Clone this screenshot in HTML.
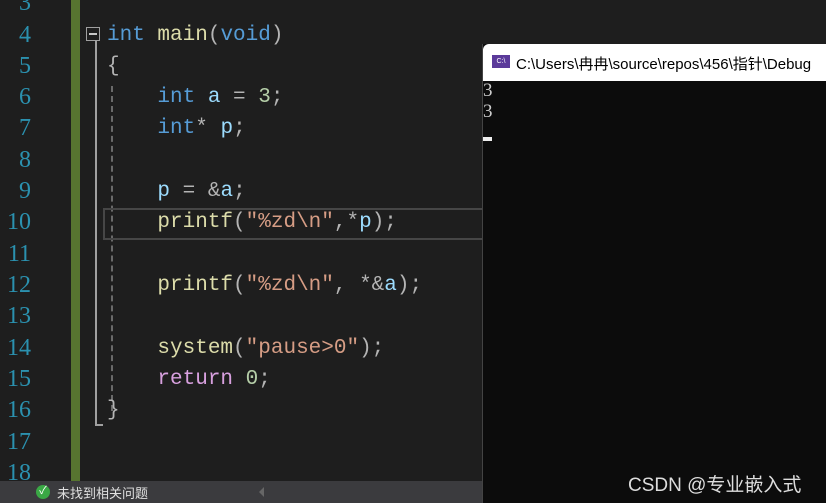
<!DOCTYPE html><html><head><meta charset="utf-8"><style>
body{margin:0;width:826px;height:503px;overflow:hidden;background:#1e1e1e;position:relative;font-family:"Liberation Mono","Noto Sans CJK SC",monospace}
.ln{position:absolute;left:0;width:31px;text-align:right;color:#2b91af;font-size:24px;line-height:31px;font-family:"Liberation Serif",serif}
.cl{position:absolute;left:107px;font-size:21px;line-height:31px;color:#b4b4b4;white-space:pre}
.k{color:#569cd6}.f{color:#dcdcaa}.v{color:#9cdcfe}.n{color:#b5cea8}.s{color:#d69d85}.r{color:#d8a0df}
</style></head><body>
<div style="position:absolute;left:71px;top:0;width:9px;height:481px;background:#577430"></div>
<div class="ln" style="top:-12px">3</div><div class="ln" style="top:20px">4</div><div class="ln" style="top:51px">5</div><div class="ln" style="top:82px">6</div><div class="ln" style="top:113px">7</div><div class="ln" style="top:145px">8</div><div class="ln" style="top:176px">9</div><div class="ln" style="top:207px">10</div><div class="ln" style="top:239px">11</div><div class="ln" style="top:270px">12</div><div class="ln" style="top:301px">13</div><div class="ln" style="top:333px">14</div><div class="ln" style="top:364px">15</div><div class="ln" style="top:395px">16</div><div class="ln" style="top:427px">17</div><div class="ln" style="top:458px">18</div>
<div style="position:absolute;left:86px;top:27px;width:12px;height:12px;border:1px solid #a0a0a0"></div>
<div style="position:absolute;left:89px;top:33px;width:8px;height:2px;background:#c8c8c8"></div>
<div style="position:absolute;left:95px;top:41px;width:2px;height:384px;background:#a0a0a0"></div>
<div style="position:absolute;left:95px;top:424px;width:8px;height:2px;background:#a0a0a0"></div>
<div style="position:absolute;left:111px;top:86px;width:0;height:325px;border-left:2px dashed #6a6a6a"></div>
<div style="position:absolute;left:103px;top:208px;width:380px;height:28px;border:2px solid #464646"></div>
<div class="cl" style="top:20px"><span class="k">int</span> <span class="f">main</span>(<span class="k">void</span>)</div>
<div class="cl" style="top:51px">{</div>
<div class="cl" style="top:82px">    <span class="k">int</span> <span class="v">a</span> = <span class="n">3</span>;</div>
<div class="cl" style="top:113px">    <span class="k">int</span>* <span class="v">p</span>;</div>
<div class="cl" style="top:176px">    <span class="v">p</span> = &amp;<span class="v">a</span>;</div>
<div class="cl" style="top:207px">    <span class="f">printf</span>(<span class="s">″%zd\n″</span>,*<span class="v">p</span>);</div>
<div class="cl" style="top:270px">    <span class="f">printf</span>(<span class="s">″%zd\n″</span>, *&amp;<span class="v">a</span>);</div>
<div class="cl" style="top:333px">    <span class="f">system</span>(<span class="s">″pause&gt;0″</span>);</div>
<div class="cl" style="top:364px">    <span class="r">return</span> <span class="n">0</span>;</div>
<div class="cl" style="top:395px">}</div>
<div style="position:absolute;left:0;top:481px;width:482px;height:22px;background:#3b3b3e"></div>
<div style="position:absolute;left:36px;top:485px;width:14px;height:14px;border-radius:50%;background:#3aa845;color:#fff;font-size:11px;line-height:14px;text-align:center">✓</div>
<div style="position:absolute;left:57px;top:483px;font:13px 'Noto Sans CJK SC',sans-serif;color:#e0e0e0">未找到相关问题</div>
<div style="position:absolute;left:259px;top:487px;width:0;height:0;border:5px solid transparent;border-right-color:#666;border-left:0"></div>
<div style="position:absolute;left:482px;top:44px;width:344px;height:459px;background:#0c0c0c;border-left:1px solid #444"></div>
<div style="position:absolute;left:483px;top:44px;width:343px;height:37px;background:#fff;border-radius:6px 0 0 0;overflow:hidden"></div>
<div style="position:absolute;left:492px;top:55px;width:18px;height:13px;background:#5b3a9a;color:#fff;font:7px 'Liberation Sans';line-height:13px;text-align:center">C:\</div>
<div style="position:absolute;left:516px;top:53px;font:15px 'Liberation Sans','Noto Sans CJK SC',sans-serif;color:#000;white-space:nowrap">C:\Users\冉冉\source\repos\456\指针\Debug</div>
<div style="position:absolute;left:483px;top:80px;font:19px/21px 'Liberation Serif',serif;color:#ccc">3<br>3</div>
<div style="position:absolute;left:483px;top:137px;width:9px;height:4px;background:#eee"></div>
<div style="position:absolute;left:628px;top:470px;font:19px 'Liberation Sans','Noto Sans CJK SC',sans-serif;color:#ddd;white-space:nowrap">CSDN @专业嵌入式</div>
</body></html>
